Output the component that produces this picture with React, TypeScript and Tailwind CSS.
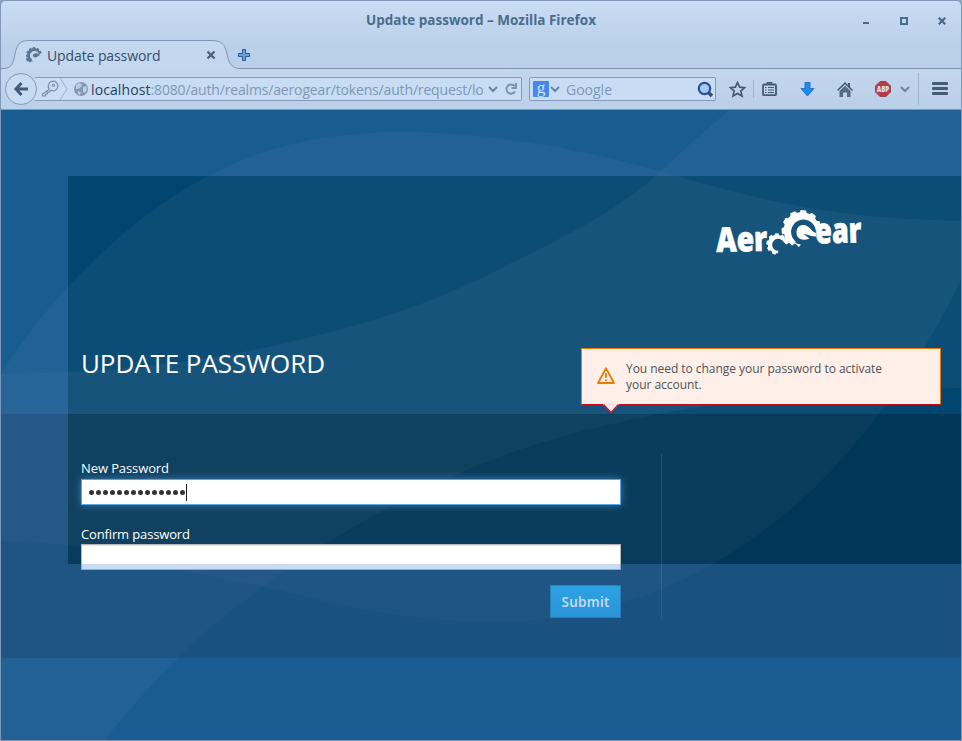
import React from "react";

const gearPath = (
  cx: number, cy: number, outer: number, root: number, teeth: number, from: number, to: number,
  inner: number, dx = 0, dy = 0,
) => {
  const step = (Math.PI * 2) / teeth;
  const pt = (x: number, y: number, r: number, a: number) => `${(x + r * Math.cos(a)).toFixed(2)},${(y + r * Math.sin(a)).toFixed(2)}`;
  const pts: string[] = [];
  for (let a = from; a < to - 0.01; a += step) {
    pts.push(
      pt(cx, cy, root, a),
      pt(cx, cy, root, a + step * 0.22),
      pt(cx, cy, outer, a + step * 0.34),
      pt(cx, cy, outer, a + step * 0.8),
      pt(cx, cy, root, a + step * 0.92),
    );
  }
  const back: string[] = [];
  for (let i = 0; i <= 24; i++) back.push(pt(cx + dx, cy + dy, inner, to - ((to - from) * i) / 24));
  return `M${pts.join("L")}L${back.join("L")}Z`;
};

function TabStrip() {
  return (
    <div className="relative flex h-[29px] shrink-0 items-start">
      <svg className="absolute left-0 top-0" width="962" height="29" viewBox="0 40 962 29" fill="none">
        <path
          d="M0 68.5H4C12 68.5 13.500 62 15 54C17 44 20 40.500 29 40.500H212C221 40.500 225 44 227 54C228.500 62 231 68.500 240 68.500H962V70H0Z"
          fill="#c3d7ef"
          stroke="#8197b8"
        />
      </svg>
      <div className="relative flex h-[29px] w-full items-center pl-[25px] pt-[1px]">
        <svg width="17" height="17" viewBox="0 0 17 17" fill="#5c7590">
          <path d={gearPath(9, 8, 8, 6.8, 11, 2.1, 6, 4.6, 0.6, 0.6)} />
          <path d="M8 7.500C10 5.500 13 6 15 8L11 10.500C9 11 7.500 9.500 8 7.500ZM1 11.500l2-1.200 1 1.500 2 .8 2 2-2-.2-1 1.300-1-1.500-2 .3z" />
        </svg>
        <span className="ml-[5px] w-[114px] whitespace-nowrap text-[14px] tracking-[-0.100px] text-[#35506b]">Update password</span>
        <svg className="ml-[45px]" width="10" height="10" viewBox="0 0 10 10" stroke="#465f7a" strokeWidth="2.200">
          <path d="M1.500 1.500l7 7M8.500 1.500l-7 7" />
        </svg>
        <svg className="ml-[22px]" width="12" height="12" viewBox="0 0 12 12">
          <path d="M4.500 .5h3v4h4v3h-4v4h-3v-4h-4v-3h4z" fill="#6b9fdc" stroke="#28599b" />
        </svg>
      </div>
    </div>
  );
}

function Chevron({ className }: { className: string }) {
  return (
    <svg className={className} width="10" height="7" viewBox="0 0 10 7" fill="none" stroke="#6a84a1" strokeWidth="2">
      <path d="M1 1l4 4 4-4" />
    </svg>
  );
}

function NavBar() {
  return (
    <div className="flex h-[41px] shrink-0 items-center border-b border-[#7d98ba] bg-gradient-to-b from-[#c3d6ee] to-[#bacfe8] pl-[4px]">
      <div className="z-10 flex h-[32px] w-[32px] shrink-0 items-center justify-center rounded-full border border-[#839bb9] bg-[#c7dbf3]">
        <svg width="16" height="16" viewBox="0 0 16 16" fill="none" stroke="#435b76" strokeWidth="3">
          <path d="M8.500 2L3 8l5.500 6M3.500 8H15" />
        </svg>
      </div>
      <div className="-ml-[3px] flex h-[24px] w-[488px] shrink-0 items-center rounded-[2px] border border-[#839bb9] border-l-transparent bg-[#c8dcf4]">
        <svg className="ml-[6px] shrink-0" width="18" height="18" viewBox="0 0 18 18" fill="none" stroke="#7890ac" strokeWidth="1.200">
          <path d="M8 9.500L1.500 14v2h3v-2h2v-2h2l1.500-1.700a4.800 4.800 0 1 0-2-1.800zM12.500 4.300a1 1 0 1 1-.1 0" />
        </svg>
        <svg className="shrink-0" width="9" height="22" viewBox="0 0 9 22" fill="none" stroke="#9bb1ce">
          <path d="M1 0l7 11-7 11" />
        </svg>
        <svg className="ml-[6px] shrink-0" width="14" height="14" viewBox="0 0 14 14">
          <circle cx="7" cy="7" r="7" fill="#8199b6" />
          <path d="M2 3l3-2 3 1-1 3-3 2-2 0zM9 5l3-1 1 3-2 4-2-1zM4 9l3 1-1 3-2-1z" fill="#b9cde6" />
        </svg>
        <div className="ml-[3px] w-[393px] overflow-hidden whitespace-nowrap text-[14px] tracking-[-0.160px] text-[#7f98b6]">
          <span className="tracking-[0.100px] text-[#29435e]">localhost</span>:8080/auth/realms/aerogear/tokens/auth/request/lo
        </div>
        <Chevron className="ml-[5px] shrink-0" />
        <svg className="ml-[7px] mr-[4px] shrink-0" width="12" height="12" viewBox="0 0 12 12" fill="none" stroke="#7893b0" strokeWidth="2">
          <path d="M10 8.500a4.600 4.600 0 1 1-.5-5.500M11 0v5H6.500" />
        </svg>
      </div>
      <div className="ml-[7px] flex h-[24px] w-[187px] shrink-0 items-center rounded-[2px] border border-[#839bb9] bg-[#c8dcf4] pl-[3px]">
        <div className="flex h-[16px] w-[16px] items-center justify-center rounded-[1px] bg-[#4587ea] pb-[4px] font-['Liberation_Serif',serif] text-[17px] leading-none text-[#d5e5f8]">g</div>
        <Chevron className="ml-[1px]" />
        <span className="ml-[6px] w-[131px] text-[14px] text-[#7f98b6]">Google</span>
        <svg className="shrink-0" width="17" height="17" viewBox="0 0 17 17" fill="none">
          <path d="M11 11l4 4" stroke="#3a4f6c" strokeWidth="3.500" />
          <circle cx="7.500" cy="7.500" r="5.700" fill="#a9c9f2" stroke="#2b50a0" strokeWidth="2.200" />
        </svg>
      </div>
      <svg className="ml-[13px] shrink-0" width="17" height="17" viewBox="0 0 17 17" fill="none" stroke="#435b76" strokeWidth="1.700">
        <path d="M8.500 1.500l2.100 4.700 5 .5-3.800 3.400 1.200 5-4.500-2.700L4 15.100l1.200-5L1.400 6.700l5-.5z" />
      </svg>
      <div className="ml-[7px] h-[18px] w-px shrink-0 bg-[#9cb3cf]" />
      <svg className="ml-[8px] shrink-0" width="15" height="14" viewBox="0 0 15 14" fill="none" stroke="#435b76">
        <path d="M5.500 2V.8h4V2" strokeWidth="1.600" />
        <rect x="1" y="2.500" width="13" height="10.700" rx="1" strokeWidth="1.800" />
        <path d="M3 5.500h1.500M6 5.500h6M3 8h1.500M6 8h6M3 10.500h1.500M6 10.500h6" strokeWidth="1.200" />
      </svg>
      <svg className="ml-[23px] shrink-0" width="15" height="15" viewBox="0 0 15 15">
        <path d="M5 .5h5v6h4L7.500 14 1 6.500h4z" fill="#188df0" stroke="#2675c8" />
      </svg>
      <svg className="ml-[22px] shrink-0" width="16" height="15" viewBox="0 0 16 15" fill="#435b76">
        <path d="M8 0l3 3V1h2v4l3 3-1 1-7-6.700L1 9 0 8z" />
        <path d="M8 3.700l5.500 5.200V15H10v-4.500H6V15H2.500V8.900z" opacity=".85" />
      </svg>
      <svg className="ml-[22px] shrink-0" width="16" height="16" viewBox="0 0 16 16" overflow="visible">
        <path d="M5 .5h6L15.500 5v6L11 15.500H5L.5 11V5z" fill="#b93b49" stroke="#984457" />
        <text x="8" y="11" textAnchor="middle" textLength="12.500" lengthAdjust="spacingAndGlyphs" fontSize="8.500" fontWeight="800" fill="#d9e4f5">ABP</text>
      </svg>
      <Chevron className="ml-[9px] shrink-0" />
      <div className="ml-[8px] h-[32px] w-px shrink-0 bg-[#9cb3cf]" />
      <div className="-mt-[2px] ml-[13px] flex w-[16px] shrink-0 flex-col gap-[2px]">
        <div className="h-[3px] rounded-[1px] bg-[#435b76]" />
        <div className="h-[3px] rounded-[1px] bg-[#435b76]" />
        <div className="h-[3px] rounded-[1px] bg-[#435b76]" />
      </div>
    </div>
  );
}

function Backdrop() {
  return (
    <svg className="absolute left-0 top-0" width="960" height="630" viewBox="1 110 960 630" fill="#ffe0ff" fillOpacity=".046">
      <path d="M0 374C22 342 42 314 68 287C106 246 150 207 208 176C270 143 335 132 405 132C490 133 575 147 660 171C760 201 835 219 962 221V277C940 325 914 366 881 411C852 449 828 476 798 503C742 552 682 586 620 603C575 617 533 622 491 622C426 621 365 612 307 597C262 585 224 580 184 570C143 558 105 544 0 541Z" />
      <path d="M729 110C707 129 684 149 660 172C618 210 569 235 509 264C444 299 381 320 303 339C227 358 128 373 0 374V741H104C125 714 149 687 178 658C205 630 232 610 264 586C302 556 347 530 393 505C436 483 480 462 528 447C576 431 625 420 675 411C735 400 796 392 962 388V110Z" />
    </svg>
  );
}

function Logo() {
  return (
    <svg width="150" height="50" viewBox="714 208 150 50" fill="#fff" fontFamily="'Open Sans', sans-serif" fontWeight="800" overflow="visible">
      <g transform="rotate(-1.500 716 252)" stroke="#fff" strokeWidth=".7">
        <text x="716.500" y="252" fontSize="34" textLength="51" lengthAdjust="spacingAndGlyphs">Aer</text>
      </g>
      <g transform="rotate(-1.500 816 243)" stroke="#fff" strokeWidth=".7">
        <text x="815.500" y="243.500" fontSize="35" textLength="46" lengthAdjust="spacingAndGlyphs">ear</text>
      </g>
      <path d={gearPath(801.5, 230, 20, 17.8, 11, 2.2, 6.2, 12.4, 2, 2)} />
      <path d="M791.500 237C792.500 242 796 244 801 244.500L799 247L795 243.500L792 245.500L788 241Z" />
      <path d="M796.500 232.500C796.500 226.500 801 224 806 225.500C810 227 811 231 816 233V236.500C811 236.500 808 234.500 803.500 234L809.500 238.500C802 241.500 796.500 238.500 796.500 232.500Z" />
      <path d={gearPath(777, 244, 10.8, 9.2, 9, 1.5, 5.7, 6, 1.2, 0.8)} />
    </svg>
  );
}

function Alert() {
  return (
    <div className="relative flex h-[57px] w-[360px] items-center border border-[#ec7a08] border-b-[#c00c1c] bg-[#fef0e8] pl-[15px]">
      <svg className="-mt-px" width="18" height="18" viewBox="0 0 18 18" fill="none" stroke="#ec7a08" strokeWidth="1.800" strokeLinejoin="round">
        <path d="M9 1.200L17 16H1zM9 6v5M9 12.500v1.700" />
      </svg>
      <p className="ml-[11px] w-[275px] text-[12px] leading-[16px] tracking-[-0.040px] text-[#4d5258]">You need to change your password to activate your account.</p>
      <svg className="absolute left-[21px] top-[54px]" width="16" height="11" viewBox="0 0 16 11">
        <path d="M0 0h16v1.500L8 10 0 1.500z" fill="#fbe6e8" />
        <path d="M.5 1.500L8 9.500l7.500-8" fill="none" stroke="#b8172a" strokeWidth="1.300" />
      </svg>
    </div>
  );
}

export default function App() {
  return (
    <div className="flex h-[741px] w-[962px] flex-col overflow-hidden bg-[#8aa3c1] font-['Open_Sans',sans-serif]">
      <div className="flex min-h-0 flex-1 flex-col rounded-t-[5px] border border-[#8197b8] bg-[#b9cfe8]">
        <div className="-mx-px flex h-[110px] shrink-0 flex-col rounded-t-[5px] border-x border-[#8197b8] bg-gradient-to-b from-[#c9ddf5] to-[#bacfe8] to-[45px]">
          <div className="-ml-px flex h-[39px] shrink-0 items-center">
            <div className="w-[863px] pl-[99px] text-center text-[13.500px] font-bold text-[#4a6d8c]">Update password – Mozilla Firefox</div>
            <div className="flex items-center">
              <div className="mt-[5px] h-[2px] w-[6px] bg-[#476b8b]" />
              <div className="ml-[31px] h-[8px] w-[8px] border-2 border-[#476b8b]" />
              <svg className="ml-[30px]" width="8" height="8" viewBox="0 0 8 8" stroke="#476b8b" strokeWidth="2.200">
                <path d="M.7 .7l6.600 6.600M7.300 .7L.7 7.300" />
              </svg>
            </div>
          </div>
          <div className="-ml-px"><TabStrip /></div>
          <NavBar />
        </div>
        <div className="relative -mt-px flex min-h-0 flex-1 flex-col overflow-hidden bg-[#004670]">
          <Backdrop />
          <div className="relative flex h-[304px] shrink-0 flex-col pl-[80px] pr-[20px]">
            <div className="flex h-[238px] justify-end pr-[77px] pt-[98px]"><Logo /></div>
            <div className="flex items-start justify-between">
              <h1 className="text-[26px] leading-[30px] tracking-[-0.080px] text-white">UPDATE PASSWORD</h1>
              <Alert />
            </div>
          </div>
          <div className="relative flex h-[244px] shrink-0 bg-black/[0.22] pl-[80px]">
            <div className="flex w-[540px] flex-col pt-[45px]">
              <label className="h-[20px] text-[13px] leading-[18px] tracking-[-0.100px] text-white">New Password</label>
              <div className="flex h-[26px] items-center gap-[2px] border border-[#5ca6e5] bg-white pl-[7px] shadow-[0_0_8px_#3a7bb0]">
                {Array.from({ length: 14 }, (_, i) => (
                  <span key={i} className="h-[5px] w-[5px] rounded-full bg-[#333]" />
                ))}
                <span className="-ml-px h-[17px] w-px bg-[#222]" />
              </div>
              <label className="mt-[20px] h-[19px] text-[13px] leading-[18px] tracking-[-0.140px] text-white">Confirm password</label>
              <div className="h-[26px] border border-[#b6b6b6] bg-white shadow-[inset_0_1px_1px_rgba(0,0,0,0.1)]" />
              <button className="mt-[15px] h-[33px] w-[71px] self-end border border-[#1f78ae] bg-gradient-to-b from-[#1cace8] to-[#1998d5] pt-px text-[13.500px] font-semibold tracking-[0.300px] text-white">Submit</button>
            </div>
            <div className="ml-[40px] mt-[40px] h-[164px] w-px bg-white/10" />
          </div>
          <div className="pointer-events-none absolute left-[67px] top-[66px] h-[388px] w-[900px] shadow-[0_0_0_1000px_rgba(80,141,219,0.310)]" />
        </div>
      </div>
    </div>
  );
}
